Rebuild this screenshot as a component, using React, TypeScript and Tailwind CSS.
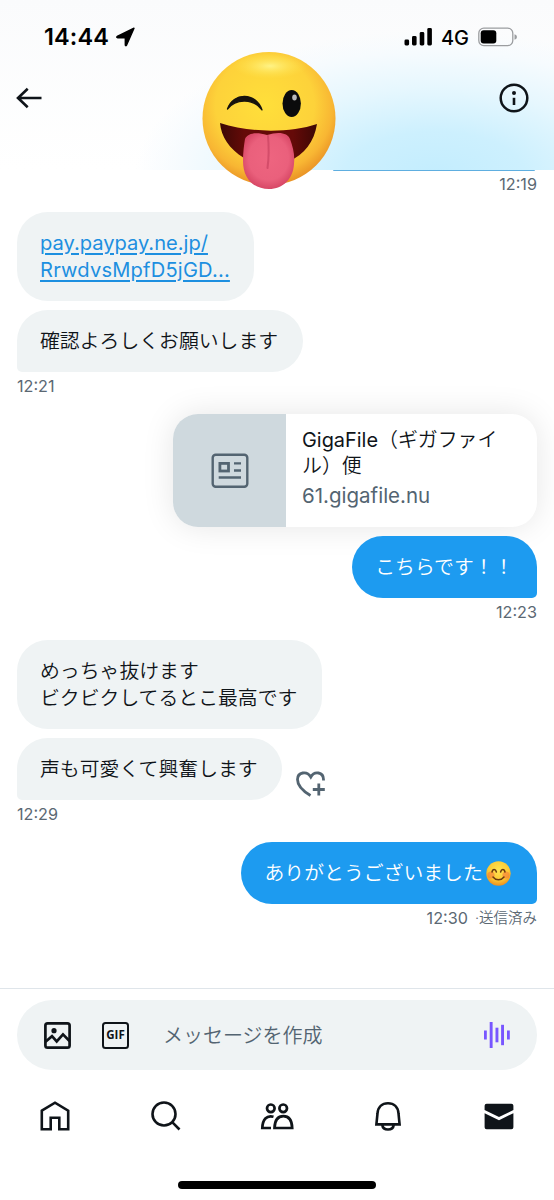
import type { ReactNode } from 'react';

function Time({ children, sent = false }: { children: ReactNode; sent?: boolean }) {
  return (
    <div
      className={`flex h-[42px] items-start text-[16.2px] leading-[28px] font-normal text-[#5b6873] ${sent ? 'justify-end' : 'justify-start'}`}
    >
      {children}
    </div>
  );
}

function Bubble({ children, sent = false, tail = false }: { children: ReactNode; sent?: boolean; tail?: boolean }) {
  const side = sent ? 'self-end bg-[#1d9bf0] px-[23.5px] text-white' : 'self-start bg-[#eff3f4] pr-[24.5px] pl-[23px] text-[#0f1419]';
  const corner = tail ? (sent ? 'rounded-br-[5px]' : 'rounded-bl-[5px]') : '';
  return (
    <div className={`rounded-[31px] py-[17.5px] text-[19.85px] leading-[27px] whitespace-nowrap ${side} ${corner}`}>
      {children}
    </div>
  );
}

function WinkEmoji() {
  return (
    <svg className="absolute top-[51px] left-[202px] z-10 h-[139px] w-[135px]" viewBox="0 0 135 139">
      <defs>
        <radialGradient id="face" cx="0.47" cy="0.4" r="0.6">
          <stop offset="0" stopColor="#ffdf3a" />
          <stop offset="0.62" stopColor="#fdd23a" />
          <stop offset="0.85" stopColor="#f8b633" />
          <stop offset="1" stopColor="#ea9426" />
        </radialGradient>
        <radialGradient id="shine" cx="0.5" cy="0.5" r="0.5">
          <stop offset="0" stopColor="#fff58a" stopOpacity="0.95" />
          <stop offset="1" stopColor="#ffe34d" stopOpacity="0" />
        </radialGradient>
        <linearGradient id="mouth" x1="0" x2="1">
          <stop offset="0" stopColor="#3c0805" />
          <stop offset="0.25" stopColor="#650a08" />
          <stop offset="0.75" stopColor="#650a08" />
          <stop offset="1" stopColor="#3c0805" />
        </linearGradient>
        <radialGradient id="tongue" cx="0.5" cy="0.45" r="0.6">
          <stop offset="0" stopColor="#ee6580" />
          <stop offset="0.65" stopColor="#ea607c" />
          <stop offset="1" stopColor="#d2405f" />
        </radialGradient>
      </defs>
      <circle cx="67" cy="67.5" r="66.5" fill="url(#face)" />
      <ellipse cx="68" cy="15" rx="37" ry="13" fill="url(#shine)" />
      <path d="M25.5 58C31 41 54 41 60 59C52 47.5 34 47 25.5 58Z" fill="#17130d" stroke="#17130d" strokeWidth="1.3" strokeLinejoin="round" />
      <ellipse cx="89.7" cy="52.5" rx="9.2" ry="13.5" fill="#0b0b0c" />
      <ellipse cx="92.5" cy="46.5" rx="2.3" ry="3" fill="#b9b9bb" />
      <path d="M18 72C48 82 88 82 115 73C112 91 103 103 86 111L42 107C27 98 19 85 18 72Z" fill="url(#mouth)" />
      <path d="M43 88C46 82 54 81 65 84C77 80 86 82 88 88C91 96 93 104 92 113C91 128 81 138 67 138C51 138 41 127 41 110C41 101 42 94 43 88Z" fill="url(#tongue)" />
      <path d="M66 85C67 96 67 106 65.5 117" fill="none" stroke="#c94361" strokeWidth="2" strokeLinecap="round" opacity="0.7" />
    </svg>
  );
}

function SmileEmoji() {
  return (
    <svg className="mr-[2.7px] ml-[3px] h-[25px] w-[25px]" viewBox="0 0 25 25">
      <defs>
        <radialGradient id="smile" cx="0.5" cy="0.35" r="0.65">
          <stop offset="0" stopColor="#ffe552" />
          <stop offset="0.65" stopColor="#fcc934" />
          <stop offset="1" stopColor="#ec8f20" />
        </radialGradient>
      </defs>
      <circle cx="12.5" cy="12.5" r="12.2" fill="url(#smile)" />
      <circle cx="5" cy="14" r="3.6" fill="#f6693c" opacity="0.5" />
      <circle cx="20" cy="14" r="3.6" fill="#f6693c" opacity="0.5" />
      <g fill="none" stroke="#6b3a10" strokeWidth="1.5" strokeLinecap="round">
        <path d="M6 11C6.7 7.8 9.6 7.8 10.4 11" />
        <path d="M14.6 11C15.4 7.8 18.3 7.8 19 11" />
        <path d="M7 16C10 19.8 15 19.8 18 16" />
      </g>
    </svg>
  );
}

function Header() {
  return (
    <header className="relative h-[170px] bg-[radial-gradient(ellipse_300px_145px_at_435px_175px,#c3edfe_0%,#cdf0fe_30%,#e6f7fe_60%,#f6fbfe_85%,transparent_100%),linear-gradient(#fafbfc,#ffffff)]">
      <div className="flex h-[74px] items-center justify-between pr-[37px] pl-[44px]">
        <div className="flex items-center gap-[7px]">
          <span className="text-[23.5px] font-semibold tracking-[0.1px] text-black">14:44</span>
          <svg className="h-[20px] w-[19px]" viewBox="0 0 19 20">
            <path d="M18 1.2L10.5 18.3Q9.6 19.2 9.3 18V10.8H1.8Q0 10.3 1.2 9.5Z" fill="#000" stroke="#000" strokeWidth="1.4" strokeLinejoin="round" />
          </svg>
        </div>
        <div className="flex items-center">
          <svg className="h-[18px] w-[29px]" viewBox="0 0 29 18">
            <rect x="0.5" y="11.5" width="4.6" height="6" rx="1.4" />
            <rect x="8" y="8" width="4.6" height="9.5" rx="1.4" />
            <rect x="15.7" y="4" width="4.6" height="13.5" rx="1.4" />
            <rect x="23.3" y="0" width="4.6" height="17.5" rx="1.4" />
          </svg>
          <span className="ml-[8px] pt-[2px] text-[20px] font-[450] text-black">4G</span>
          <svg className="ml-[9px] h-[20px] w-[39px]" viewBox="0 0 39 20">
            <rect x="0.8" y="1.2" width="34" height="17.4" rx="5" fill="none" stroke="#9b9da0" strokeWidth="1.3" />
            <rect x="2.7" y="3.2" width="15.6" height="13.4" rx="3" />
            <path d="M36.5 7.2Q39 8 39 10Q39 12 36.5 12.8Z" fill="#9b9da0" />
          </svg>
        </div>
      </div>
      <div className="flex h-[48px] items-center justify-between pr-[25px] pl-[16px]">
        <svg className="h-[22px] w-[26px]" viewBox="0 0 26 22" fill="none" stroke="#0f1419" strokeWidth="2.6">
          <path d="M11.7 1.7L2 11L11.7 20.3M2 11H25.5" />
        </svg>
        <svg className="h-[30px] w-[30px]" viewBox="0 0 30 30">
          <circle cx="15" cy="15" r="13.3" fill="none" stroke="#0f1419" strokeWidth="2.5" />
          <circle cx="15" cy="10" r="2" fill="#0f1419" />
          <path d="M13.7 14.8H16.3V22H13.7Z" fill="#0f1419" />
        </svg>
      </div>
      <div className="absolute right-[19px] -bottom-px h-[1.5px] w-[202px] rounded-b-full bg-[#5eaee0]" />
      <WinkEmoji />
    </header>
  );
}

function LinkCard() {
  return (
    <div className="mb-[9px] flex h-[113px] w-[364px] self-end overflow-hidden rounded-[25px] bg-white shadow-[0_0_32px_rgba(0,0,0,0.1)]">
      <div className="flex w-[113px] items-center justify-center bg-[#cfd9de]">
        <svg className="h-[36px] w-[38px]" viewBox="0 0 38 36" fill="none" stroke="#536471" strokeWidth="2.4">
          <rect x="1.7" y="1.7" width="34.6" height="32" rx="3" />
          <rect x="8.9" y="10.4" width="8.6" height="7.6" strokeWidth="2.8" />
          <path d="M23 10.4H30M23 17.5H30M7.7 24.5H30" />
        </svg>
      </div>
      <div className="flex flex-1 flex-col pt-[13px] pl-[16px] whitespace-nowrap">
        <p className="text-[19.9px] leading-[26px] text-[#0f1419]">
          <span className="font-normal">GigaFile</span>（ギガファイ
          <br />
          ル）便
        </p>
        <p className="mt-[3px] text-[20.5px] leading-[28px] font-normal text-[#536471]">61.gigafile.nu</p>
      </div>
    </div>
  );
}

function Composer() {
  return (
    <div className="mx-[17px] mt-[11px] flex h-[70px] items-center rounded-full bg-[#eff3f4] pr-[26px] pl-[27px]">
      <svg className="h-[27px] w-[27px]" viewBox="0 0 27 27" fill="none" stroke="#0f1419" strokeWidth="2.7">
        <rect x="1.4" y="1.4" width="24.2" height="24.2" rx="2.2" />
        <circle cx="10" cy="8.7" r="2.6" fill="#0f1419" stroke="none" />
        <path d="M1.5 19.7L8 14.2L12.7 19.4L19 12.4L25.5 19" />
      </svg>
      <span className="ml-[31px] flex h-[27px] w-[27px] items-center justify-center rounded-[3.5px] border-[2.7px] border-[#0f1419] font-['Open_Sans',sans-serif] text-[11.5px] leading-none font-bold text-[#0f1419]">
        GIF
      </span>
      <span className="ml-[34px] flex-1 pt-[2px] text-[20px] text-[#536471]">メッセージを作成</span>
      <svg className="h-[28px] w-[28px]" viewBox="0 0 28 28" fill="#7856ff">
        <rect x="1" y="9.5" width="2.8" height="9" />
        <rect x="6.7" y="1" width="2.9" height="26" />
        <rect x="12.5" y="6.7" width="2.9" height="14.6" />
        <rect x="18.1" y="3.8" width="2.9" height="20.4" />
        <rect x="24" y="9.5" width="2.8" height="9" />
      </svg>
    </div>
  );
}

function TabBar() {
  return (
    <nav className="flex h-[92px] items-center justify-around text-[#0f1419]">
      <svg className="h-[32px] w-[32px]" viewBox="0 0 32 32" fill="none" stroke="currentColor" strokeWidth="2.6">
        <path d="M2.8 10.7L16 2.7L29.2 10.7V29.3H20.3V17.8H11.7V29.3H2.8Z" />
      </svg>
      <svg className="h-[32px] w-[32px]" viewBox="0 0 32 32" fill="none" stroke="currentColor" strokeWidth="2.6">
        <circle cx="14" cy="14" r="11.5" />
        <path d="M22.2 22.2L29.5 29.5" />
      </svg>
      <svg className="h-[32px] w-[34px]" viewBox="0 0 34 32" fill="none" stroke="currentColor" strokeWidth="2.7">
        <circle cx="10.8" cy="8.3" r="3.8" />
        <circle cx="23.2" cy="8.3" r="3.8" />
        <path d="M13.5 16.7C6.5 14.8 2.6 19.5 2.3 28H11" />
        <path d="M14.5 28C14.8 20.5 17.5 16.2 23.4 16.2C29.2 16.2 31.9 20.5 32.2 28Z" />
      </svg>
      <svg className="h-[32px] w-[32px]" viewBox="0 0 32 32" fill="none" stroke="currentColor" strokeWidth="2.6">
        <path d="M4.4 24.4L5.5 13.5C6 7 10 3.3 16 3.3S26 7 26.5 13.5L27.6 24.4ZM10.3 25C11 31 21 31 21.7 25" />
      </svg>
      <svg className="h-[32px] w-[32px]" viewBox="0 0 32 32" fill="currentColor">
        <path d="M1.6 5.7Q1.6 3.7 3.6 3.7H28.4Q30.4 3.7 30.4 5.7V10L16 17L1.6 10Z" />
        <path d="M1.6 13.2L16 20.2L30.4 13.2V27.2Q30.4 29.2 28.4 29.2H3.6Q1.6 29.2 1.6 27.2Z" />
      </svg>
    </nav>
  );
}

export default function App() {
  return (
    <div className="flex h-[1200px] w-[554px] flex-col overflow-hidden bg-white font-['Inter','Noto_Sans_CJK_JP',sans-serif] font-[350]">
      <Header />
      <main className="flex h-[818px] flex-col px-[17px]">
        <Time sent>12:19</Time>
        <div className="mb-[9px] flex flex-col">
          <Bubble>
            <a className="block text-[20.1px] font-normal text-[#1d8fe0] underline decoration-[1.5px] underline-offset-[3px]">
              <span className="block">pay.paypay.ne.jp/</span>
              <span className="block tracking-[0.2px]">RrwdvsMpfD5jGD...</span>
            </a>
          </Bubble>
        </div>
        <Bubble tail>確認よろしくお願いします</Bubble>
        <Time>12:21</Time>
        <LinkCard />
        <Bubble sent tail>こちらです！！</Bubble>
        <Time sent>12:23</Time>
        <div className="mb-[9px] flex flex-col">
          <Bubble>
            めっちゃ抜けます
            <br />
            ビクビクしてるとこ最高です
          </Bubble>
        </div>
        <div className="flex items-center gap-[13px]">
          <Bubble tail>声も可愛くて興奮します</Bubble>
          <svg className="mt-[29px] h-[28px] w-[32px]" viewBox="0 0 32 28" fill="none" stroke="#536471" strokeWidth="2.8">
            <path d="M15.5 25.5C7 20.5 2.5 15.5 2.5 9.5C2.5 2 12 0.5 15.8 7C19.3 0.5 28.5 2 28.5 9.5V10.5M23.8 13.5V25.5M17.8 19.5H29.8" />
          </svg>
        </div>
        <Time>12:29</Time>
        <Bubble sent tail>
          <span className="flex items-center">
            ありがとうございました
            <SmileEmoji />
          </span>
        </Bubble>
        <Time sent>
          12:30<span className="ml-[7px] text-[14.5px] font-[350]">·送信済み</span>
        </Time>
      </main>
      <footer className="flex flex-col border-t border-[#dfe5ea]">
        <Composer />
        <TabBar />
        <div className="mx-auto mt-[19px] h-[8px] w-[198px] rounded-full bg-black" />
      </footer>
    </div>
  );
}
